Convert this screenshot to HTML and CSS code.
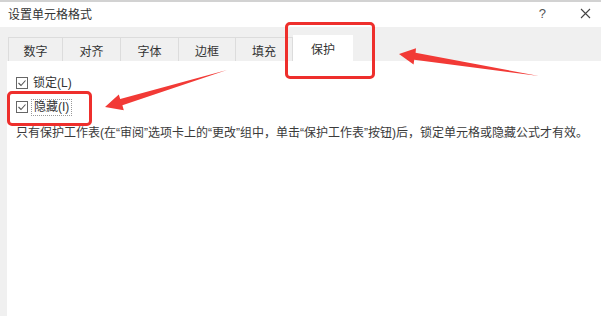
FILE: index.html
```html
<!DOCTYPE html>
<html lang="zh-CN">
<head>
<meta charset="utf-8">
<title>设置单元格格式</title>
<link rel="stylesheet" href="styles.css">
</head>
<body>
<div class="dialog">
  <div class="titlebar">
    <span class="title">设置单元格格式</span>
    <div class="controls">
      <span class="help">?</span>
      <svg class="close" width="11" height="11" viewBox="0 0 11 11"><path d="M1 1 L10 10 M10 1 L1 10" stroke="#444" stroke-width="1.1" fill="none"/></svg>
    </div>
  </div>
  <div class="body">
    <div class="tabs">
      <div class="tab t1">数字</div>
      <div class="tab t2">对齐</div>
      <div class="tab t3">字体</div>
      <div class="tab t4">边框</div>
      <div class="tab t5">填充</div>
      <div class="tab active">保护</div>
    </div>
    <div class="panel">
      <label class="row">
        <span class="cb"><svg width="10" height="10" viewBox="0 0 10 10"><path d="M1.5 5 L4 7.5 L8.5 2.5" stroke="#555" stroke-width="1.1" fill="none"/></svg></span>
        <span class="lbl">锁定(L)</span>
      </label>
      <label class="row">
        <span class="cb"><svg width="10" height="10" viewBox="0 0 10 10"><path d="M1.5 5 L4 7.5 L8.5 2.5" stroke="#555" stroke-width="1.1" fill="none"/></svg></span>
        <span class="lbl focus">隐藏(I)</span>
      </label>
      <p class="note">只有保护工作表(在“审阅”选项卡上的“更改”组中，单击“保护工作表”按钮)后，锁定单元格或隐藏公式才有效。</p>
    </div>
  </div>
</div>
<div class="mark mark-tab"></div>
<div class="mark mark-hide"></div>
<svg class="arrows" width="601" height="316" viewBox="0 0 601 316">
  <polygon fill="#f23a36" points="399,54 416,48.3 415.6,52.8 539,76 414.2,59.8 413.6,64.6"/>
  <polygon fill="#f23a36" points="105,107 118.8,94.4 120.2,99 227,70 122.4,105.2 123.8,110.2"/>
</svg>
</body>
</html>
```
FILE: styles.css
```css
* { box-sizing: border-box; }
html, body {
  margin: 0;
  padding: 0;
  width: 601px;
  height: 316px;
  overflow: hidden;
  background: #fff;
  font-family: "Liberation Sans", "Noto Sans CJK SC", sans-serif;
  color: #3a3a3a;
}
.dialog {
  width: 601px;
  height: 316px;
  display: flex;
  flex-direction: column;
  border-top: 2px solid #d2d2d2;
}
.titlebar {
  height: 25px;
  display: flex;
  align-items: center;
  justify-content: space-between;
  padding: 0 10px 0 8px;
  background: #fff;
}
.title {
  font-size: 12px;
  color: #333;
  margin-top: -2px;
}
.controls {
  display: flex;
  align-items: center;
  gap: 34px;
  margin-top: -2px;
}
.help {
  font-size: 13px;
  color: #555;
}
.close { display: block; }
.body {
  flex: 1;
  background: #f0f0f0;
  padding: 9px 0 0 7px;
  display: flex;
  flex-direction: column;
}
.tabs {
  display: flex;
  align-items: flex-end;
  height: 25px;
  padding-left: 1px;
}
.tab {
  height: 24px;
  display: flex;
  align-items: center;
  justify-content: center;
  font-size: 12px;
  color: #333;
  background: #f0f0f0;
  border-top: 1px solid #dcdcdc;
  border-right: 1px solid #dcdcdc;
  padding-top: 1px;
}
.t1 { width: 55px; border-left: 1px solid #dcdcdc; }
.t2 { width: 58px; }
.t3 { width: 58px; }
.t4 { width: 57px; }
.t5 { width: 57px; }
.tab.active {
  width: 60px;
  height: 26px;
  background: #fff;
  border: none;
  padding-top: 0;
}
.panel {
  flex: 1;
  background: #fff;
  padding: 16px 0 0 9px;
}
.row {
  display: flex;
  align-items: center;
  height: 12px;
  margin-bottom: 12px;
}
.cb {
  width: 12px;
  height: 12px;
  border: 1px solid #666;
  display: flex;
  align-items: center;
  justify-content: center;
  background: #fff;
}
.cb svg { display: block; }
.lbl {
  font-size: 12px;
  color: #333;
  margin-left: 5px;
  line-height: 15px;
}
.lbl.focus {
  margin-left: 3px;
  padding: 0 2px;
  border: 1px dotted #999;
}
.note {
  margin: 0;
  font-size: 12px;
  line-height: 16px;
  color: #3a3a3a;
  white-space: nowrap;
}
.mark {
  position: absolute;
  border: 3px solid #ee2f2c;
  border-radius: 5px;
}
.mark-tab { left: 285px; top: 22px; width: 90px; height: 57px; }
.mark-hide { left: 7px; top: 91px; width: 85px; height: 35px; }
.arrows {
  position: absolute;
  left: 0;
  top: 0;
  pointer-events: none;
}
```
